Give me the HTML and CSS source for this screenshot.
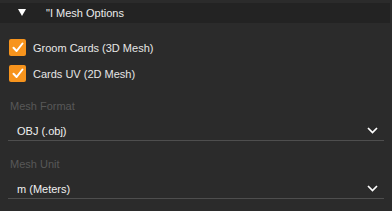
FILE: index.html
```html
<!DOCTYPE html>
<html lang="en">
<head>
    <meta charset="UTF-8">
    <title>Mesh Options</title>
    <link rel="stylesheet" href="styles.css">
</head>
<body>
    <div class="panel">
        <div class="section-header">
            <span class="caret"></span>
            <span class="section-title">"I Mesh Options</span>
        </div>
        <div class="checks">
            <label class="check">
                <span class="box">
                    <svg width="12" height="11" viewBox="0 0 12 11"><path d="M1.5 5.8 L4.6 9 L10.5 1.5" fill="none" stroke="#fff" stroke-width="2" stroke-linecap="round" stroke-linejoin="round"/></svg>
                </span>
                <span class="check-text">Groom Cards (3D Mesh)</span>
            </label>
            <label class="check">
                <span class="box">
                    <svg width="12" height="11" viewBox="0 0 12 11"><path d="M1.5 5.8 L4.6 9 L10.5 1.5" fill="none" stroke="#fff" stroke-width="2" stroke-linecap="round" stroke-linejoin="round"/></svg>
                </span>
                <span class="check-text">Cards UV (2D Mesh)</span>
            </label>
        </div>
        <div class="field field-format">
            <div class="field-label">Mesh Format</div>
            <div class="select">
                <span class="select-value">OBJ (.obj)</span>
                <svg class="chevron" width="11" height="7" viewBox="0 0 11 7"><path d="M1 1 L5.5 5.5 L10 1" fill="none" stroke="#fff" stroke-width="1.7"/></svg>
            </div>
        </div>
        <div class="field field-unit">
            <div class="field-label">Mesh Unit</div>
            <div class="select">
                <span class="select-value">m (Meters)</span>
                <svg class="chevron" width="11" height="7" viewBox="0 0 11 7"><path d="M1 1 L5.5 5.5 L10 1" fill="none" stroke="#fff" stroke-width="1.7"/></svg>
            </div>
        </div>
    </div>
</body>
</html>
```

FILE: styles.css
```css
body {
    margin: 0;
    background: #2b2b2b;
    font-family: 'Liberation Sans', Arial, sans-serif;
    color: #e6e6e6;
}
.panel {
    width: 392px;
    height: 211px;
    padding-top: 3px;
    box-sizing: border-box;
}
.section-header {
    display: flex;
    align-items: center;
    height: 20px;
    width: 390px;
    background: #232323;
}
.caret {
    width: 0;
    height: 0;
    margin-left: 18px;
    margin-top: -1px;
    border-left: 4px solid transparent;
    border-right: 4px solid transparent;
    border-top: 7px solid #fff;
}
.section-title {
    margin-left: 20px;
    font-size: 11px;
    line-height: 14px;
    color: #ececec;
}
.checks {
    display: flex;
    flex-direction: column;
    gap: 9px;
    padding: 16px 0 0 9px;
}
.check {
    display: flex;
    align-items: center;
    height: 17px;
}
.box {
    width: 17px;
    height: 17px;
    border-radius: 2px;
    background: #f7941d;
    display: flex;
    align-items: center;
    justify-content: center;
}
.check-text {
    margin-left: 7px;
    font-size: 11px;
    line-height: 14px;
    color: #e6e6e6;
}
.field {
    margin-left: 8px;
    width: 376px;
}
.field-format {
    margin-top: 17px;
}
.field-unit {
    margin-top: 16px;
}
.field-label {
    padding-left: 2px;
    font-size: 11px;
    line-height: 14px;
    color: #585858;
}
.select {
    display: flex;
    align-items: flex-start;
    justify-content: space-between;
    height: 28px;
    border-bottom: 1px solid #4e4e4e;
    box-sizing: border-box;
    padding: 11px 6px 0 9px;
}
.select-value {
    font-size: 11px;
    line-height: 14px;
    color: #f0f0f0;
}
.chevron {
    margin-top: 3px;
}
```
